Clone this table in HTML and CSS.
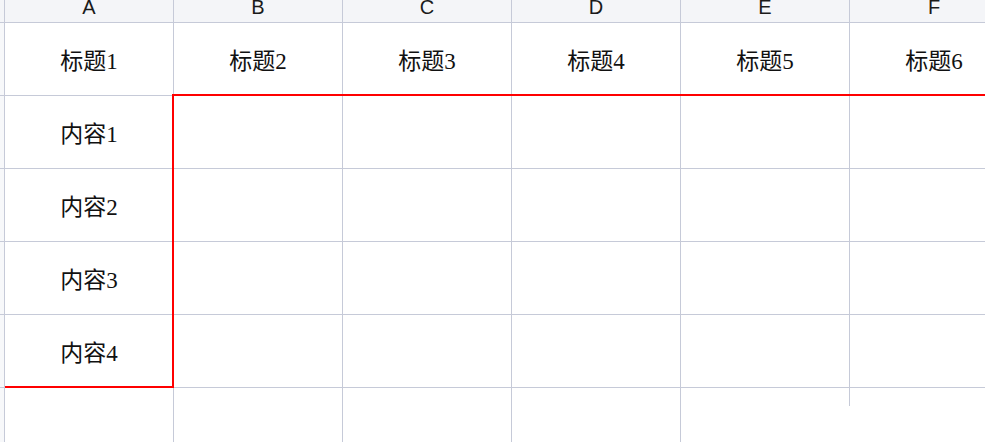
FILE: index.html
```html
<!DOCTYPE html>
<html lang="zh">
<head>
<meta charset="utf-8">
<title>Sheet</title>
<link rel="stylesheet" href="styles.css">
</head>
<body>
<div class="sheet">
  <div class="corner"></div>
  <div class="colhead">A</div>
  <div class="colhead">B</div>
  <div class="colhead">C</div>
  <div class="colhead">D</div>
  <div class="colhead">E</div>
  <div class="colhead">F</div>

  <div class="rowhead"></div>
  <div class="cell">标题1</div>
  <div class="cell">标题2</div>
  <div class="cell">标题3</div>
  <div class="cell">标题4</div>
  <div class="cell">标题5</div>
  <div class="cell">标题6</div>

  <div class="rowhead"></div>
  <div class="cell">内容1</div>
  <div class="cell"></div>
  <div class="cell"></div>
  <div class="cell"></div>
  <div class="cell"></div>
  <div class="cell"></div>

  <div class="rowhead"></div>
  <div class="cell">内容2</div>
  <div class="cell"></div>
  <div class="cell"></div>
  <div class="cell"></div>
  <div class="cell"></div>
  <div class="cell"></div>

  <div class="rowhead"></div>
  <div class="cell">内容3</div>
  <div class="cell"></div>
  <div class="cell"></div>
  <div class="cell"></div>
  <div class="cell"></div>
  <div class="cell"></div>

  <div class="rowhead"></div>
  <div class="cell">内容4</div>
  <div class="cell"></div>
  <div class="cell"></div>
  <div class="cell"></div>
  <div class="cell"></div>
  <div class="cell"></div>

  <div class="rowhead last"></div>
  <div class="cell last"></div>
  <div class="cell last"></div>
  <div class="cell last"></div>
  <div class="cell last"></div>
  <div class="cell last stub"></div>
  <div class="cell last open"></div>

  <div class="sel sel-top"></div>
  <div class="sel sel-left"></div>
  <div class="sel sel-bottom"></div>
</div>
</body>
</html>
```

FILE: styles.css
```css
html, body {
  margin: 0;
  padding: 0;
  background: #ffffff;
  overflow: hidden;
  width: 985px;
  height: 442px;
}

.sheet {
  position: relative;
  display: grid;
  grid-template-columns: 41px repeat(6, 169px);
  grid-template-rows: 31px repeat(5, 73px) 73px;
  margin-left: -36px;
  margin-top: -8px;
  width: 1055px;
}

.corner,
.colhead,
.rowhead,
.cell {
  box-sizing: border-box;
  border-right: 1px solid #c6cad8;
  border-bottom: 1px solid #c6cad8;
}

.corner,
.colhead {
  background: #f4f5f8;
}

.colhead {
  display: flex;
  align-items: center;
  justify-content: center;
  font-family: "Liberation Sans", "Noto Sans", sans-serif;
  font-size: 20px;
  color: #1a1a1a;
  padding-top: 0;
}

.rowhead {
  background: #f7f8fa;
}

.cell {
  display: flex;
  align-items: center;
  justify-content: center;
  font-family: "Liberation Serif", "Noto Sans CJK SC", serif;
  font-size: 23px;
  color: #111111;
  background: #ffffff;
}

.last {
  border-bottom: none;
}

.cell.stub {
  border-right: none;
  background: linear-gradient(#c6cad8, #c6cad8) right top / 1px 18px no-repeat, #ffffff;
}

.sel {
  position: absolute;
  background: #ff0000;
}

.sel-top {
  left: 208px;
  top: 102px;
  width: 850px;
  height: 2px;
}

.sel-left {
  left: 208px;
  top: 102px;
  width: 2px;
  height: 294px;
}

.sel-bottom {
  left: 41px;
  top: 394px;
  width: 169px;
  height: 2px;
}
```
